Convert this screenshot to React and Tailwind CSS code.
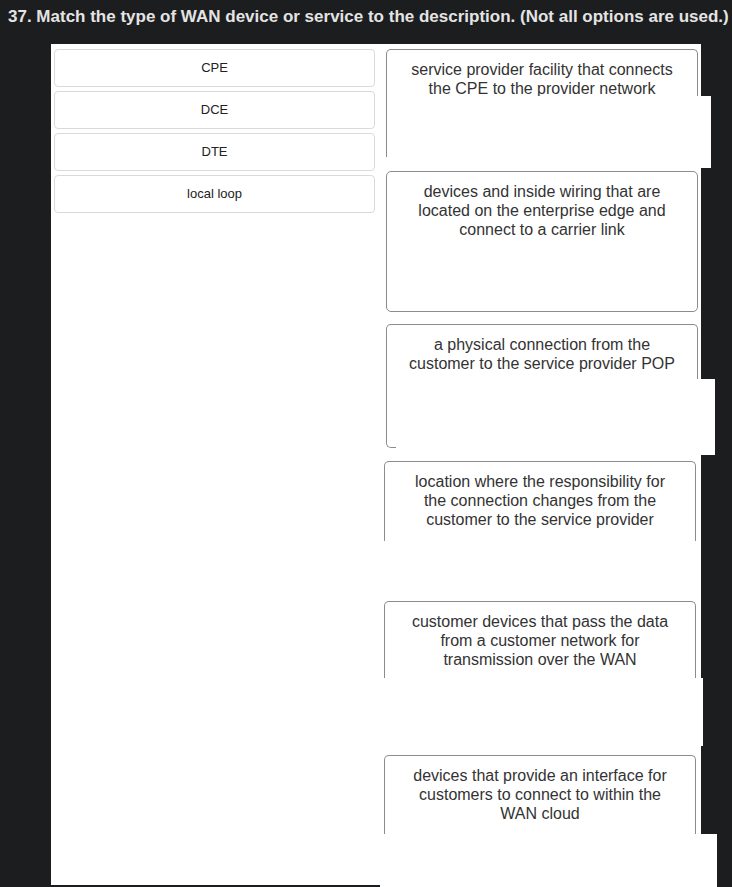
import React from "react";

const options = ["CPE", "DCE", "DTE", "local loop"];

function BoxTop({ lines, height, left = "ml-[6px]", rounded = true }) {
    return (
        <div
            className={`${left} w-[312px] border-t border-x border-[#8c8c8c] ${rounded ? "rounded-t-[5px]" : ""} pt-[10px] text-center text-[16px] leading-[19px] text-[#333]`}
            style={{ height }}
        >
            {lines.map((l, i) => (
                <div key={i}>{l}</div>
            ))}
        </div>
    );
}

export default function App() {
    return (
        <div className="h-[887px] overflow-hidden bg-[#1c1d1f]" style={{ fontFamily: '"Liberation Sans", Arial, sans-serif' }}>
            <h1 className="h-[44px] pl-[8px] pt-[6px] text-[17px] leading-[21px] font-bold text-[#e4e4e4] whitespace-nowrap">
                37. Match the type of WAN device or service to the description. (Not all options are used.)
            </h1>

            <div className="ml-[51px] flex items-start">
                {/* options */}
                <div className="w-[329px] h-[841px] bg-white pt-[5px] pl-[3px] flex flex-col gap-[4px]">
                    {options.map((o) => (
                        <div
                            key={o}
                            className="w-[321px] h-[38px] rounded-[4px] border border-[#dadada] flex items-center justify-center text-[13px] text-[#222]"
                        >
                            {o}
                        </div>
                    ))}
                </div>

                {/* descriptions */}
                <div className="w-[321px] flex flex-col">
                    <div className="h-[5px] bg-white" />
                    <div className="bg-white">
                        <BoxTop height={47} lines={["service provider facility that connects", "the CPE to the provider network"]} />
                    </div>
                    <div className="w-[331px] h-[72px] bg-white">
                        <div className="ml-[6px] w-px h-[61px] bg-[#8c8c8c]" />
                    </div>
                    <div className="h-[3px] bg-white" />

                    <div className="bg-white">
                        <div className="ml-[6px] w-[312px] h-[141px] rounded-[5px] border border-[#8c8c8c] pt-[10px] text-center text-[16px] leading-[19px] text-[#333]">
                            <div>devices and inside wiring that are</div>
                            <div>located on the enterprise edge and</div>
                            <div>connect to a carrier link</div>
                        </div>
                    </div>
                    <div className="h-[12px] bg-white" />

                    <div className="bg-white">
                        <BoxTop height={55} lines={["a physical connection from the", "customer to the service provider POP"]} />
                    </div>
                    <div className="w-[335px] h-[76px] bg-white">
                        <div className="ml-[6px] w-[10px] h-[69px] border-l border-b border-[#8c8c8c] rounded-bl-[5px]" />
                    </div>
                    <div className="h-[6px] bg-white" />

                    <div className="bg-white">
                        <BoxTop
                            left="ml-[4px]"
                            height={80}
                            lines={["location where the responsibility for", "the connection changes from the", "customer to the service provider"]}
                        />
                    </div>
                    <div className="h-[60px] bg-white" />

                    <div className="bg-white">
                        <BoxTop
                            left="ml-[4px]"
                            height={77}
                            lines={["customer devices that pass the data", "from a customer network for", "transmission over the WAN"]}
                        />
                    </div>
                    <div className="w-[323px] h-[68px] bg-white" />
                    <div className="h-[9px] bg-white" />

                    <div className="bg-white">
                        <BoxTop
                            left="ml-[4px]"
                            height={79}
                            lines={["devices that provide an interface for", "customers to connect to within the", "WAN cloud"]}
                        />
                    </div>
                    <div className="w-[337px] h-[60px] bg-white" />
                </div>
            </div>
        </div>
    );
}
